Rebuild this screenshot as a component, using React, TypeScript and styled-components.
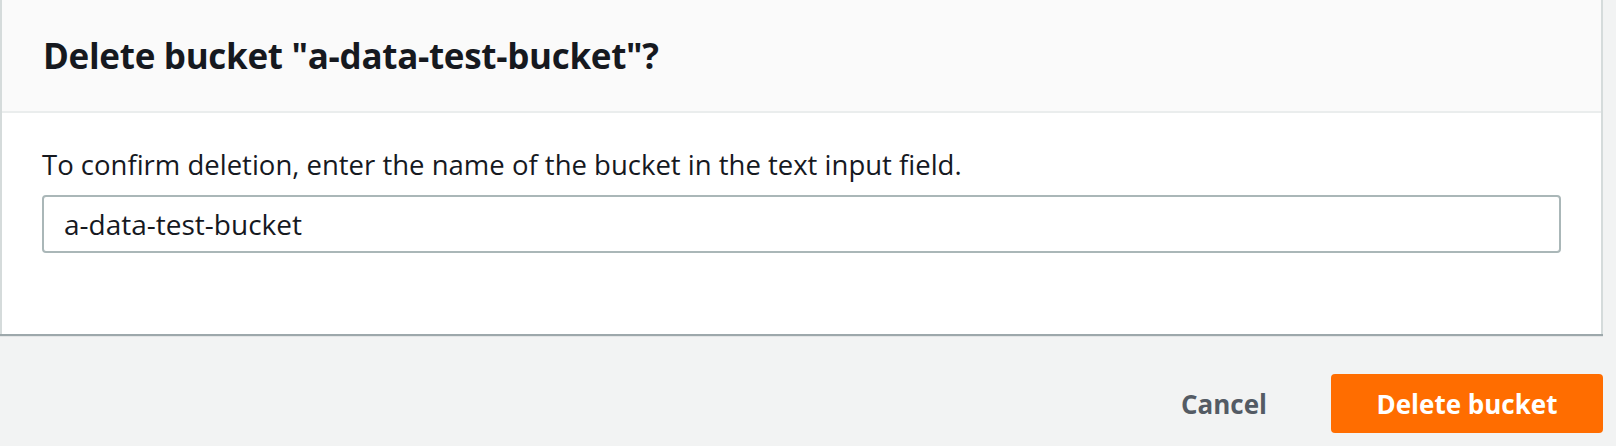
import styled, { createGlobalStyle } from "styled-components";

const Global = createGlobalStyle`
  html, body {
    margin: 0;
    padding: 0;
    background: #f2f3f3;
    font-family: "Open Sans", "Noto Sans", sans-serif;
    color: #16191f;
  }
`;

export default function App() {
  return (
    <Page>
      <Global />
      <Card>
        <CardHeader>
          <Title>Delete bucket "a-data-test-bucket"?</Title>
        </CardHeader>
        <CardBody>
          <Label htmlFor="confirm">
            To confirm deletion, enter the name of the bucket in the text input field.
          </Label>
          <Input id="confirm" defaultValue="a-data-test-bucket" />
        </CardBody>
      </Card>
      <Actions>
        <LinkButton>Cancel</LinkButton>
        <PrimaryButton>Delete bucket</PrimaryButton>
      </Actions>
    </Page>
  );
}

const Page = styled.div`
  width: 1603px;
  height: 446px;
  overflow: hidden;
`;

const Card = styled.div`
  background: #fff;
  border-left: 2px solid #d5dbdb;
  border-right: 2px solid #d5dbdb;
  box-shadow: 0 2px 1px 0 rgba(0, 28, 36, 0.35);
`;

const CardHeader = styled.div`
  height: 111px;
  display: flex;
  align-items: center;
  padding: 0 41px;
  background: #fafafa;
  border-bottom: 2px solid #eaeded;
`;

const Title = styled.h1`
  margin: 0;
  font-size: 35px;
  font-weight: 700;
  line-height: 44px;
  letter-spacing: -0.3px;
  color: #16191f;
`;

const CardBody = styled.div`
  padding: 34px 40px 81px;
  display: flex;
  flex-direction: column;
  gap: 12px;
`;

const Label = styled.label`
  font-size: 27.5px;
  line-height: 36px;
`;

const Input = styled.input`
  box-sizing: border-box;
  height: 58px;
  width: 100%;
  padding: 0 20px;
  border: 2px solid #aab7b8;
  border-radius: 4px;
  font-family: inherit;
  font-size: 28px;
  color: #16191f;
  background: #fff;
  outline: none;
`;

const Actions = styled.div`
  display: flex;
  justify-content: flex-end;
  align-items: center;
  gap: 24px;
  margin-top: 40px;
`;

const LinkButton = styled.button`
  background: none;
  border: 0;
  padding: 0 40px;
  height: 59px;
  font-family: inherit;
  font-size: 26px;
  font-weight: 700;
  color: #545b64;
`;

const PrimaryButton = styled.button`
  width: 272px;
  height: 59px;
  background: #ff6d00;
  border: 0;
  border-radius: 4px;
  font-family: inherit;
  font-size: 26px;
  font-weight: 700;
  color: #fff;
`;
